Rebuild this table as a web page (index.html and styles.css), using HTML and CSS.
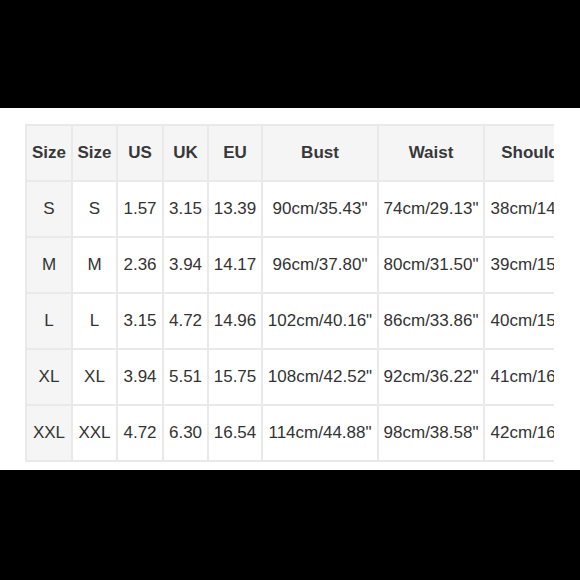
FILE: index.html
```html
<!DOCTYPE html>
<html>
<head>
<meta charset="utf-8">
<link rel="stylesheet" href="styles.css">
</head>
<body>
<div class="band"></div>
<div class="sheet">
  <div class="clip">
    <table class="chart">
      <colgroup>
        <col class="c1"><col class="c2"><col class="c3"><col class="c4"><col class="c5"><col class="c6"><col class="c7"><col class="c8">
      </colgroup>
      <thead>
        <tr><th>Size</th><th>Size</th><th>US</th><th>UK</th><th>EU</th><th>Bust</th><th>Waist</th><th>Shoulder</th></tr>
      </thead>
      <tbody>
        <tr><td class="first">S</td><td>S</td><td>1.57</td><td>3.15</td><td>13.39</td><td>90cm/35.43"</td><td>74cm/29.13"</td><td>38cm/14.96"</td></tr>
        <tr><td class="first">M</td><td>M</td><td>2.36</td><td>3.94</td><td>14.17</td><td>96cm/37.80"</td><td>80cm/31.50"</td><td>39cm/15.35"</td></tr>
        <tr><td class="first">L</td><td>L</td><td>3.15</td><td>4.72</td><td>14.96</td><td>102cm/40.16"</td><td>86cm/33.86"</td><td>40cm/15.75"</td></tr>
        <tr><td class="first">XL</td><td>XL</td><td>3.94</td><td>5.51</td><td>15.75</td><td>108cm/42.52"</td><td>92cm/36.22"</td><td>41cm/16.14"</td></tr>
        <tr><td class="first">XXL</td><td>XXL</td><td>4.72</td><td>6.30</td><td>16.54</td><td>114cm/44.88"</td><td>98cm/38.58"</td><td>42cm/16.54"</td></tr>
      </tbody>
    </table>
  </div>
</div>
</body>
</html>
```
FILE: styles.css
```css
html, body {
  margin: 0;
  padding: 0;
  background: #000;
  width: 580px;
  height: 580px;
  overflow: hidden;
}
.band {
  height: 108px;
}
.sheet {
  background: #fff;
  height: 362px;
  padding: 16px 0 0 25px;
  box-sizing: border-box;
}
.clip {
  width: 529px;
  overflow: hidden;
}
.chart {
  border-collapse: collapse;
  table-layout: fixed;
  width: 566px;
  font-family: "Liberation Sans", Arial, sans-serif;
  font-size: 17px;
  color: #333;
}
.c1 { width: 46px; }
.c2 { width: 45px; }
.c3 { width: 46px; }
.c4 { width: 45px; }
.c5 { width: 54px; }
.c6 { width: 116px; }
.c7 { width: 106px; }
.c8 { width: 108px; }
.chart th, .chart td {
  border: 2px solid #e9e9e9;
  height: 54px;
  padding: 0;
  text-align: center;
  white-space: nowrap;
  overflow: hidden;
}
.chart th {
  background: #f5f5f5;
  font-weight: bold;
  color: #38383a;
}
.chart td.first {
  background: #f5f5f5;
}
```
